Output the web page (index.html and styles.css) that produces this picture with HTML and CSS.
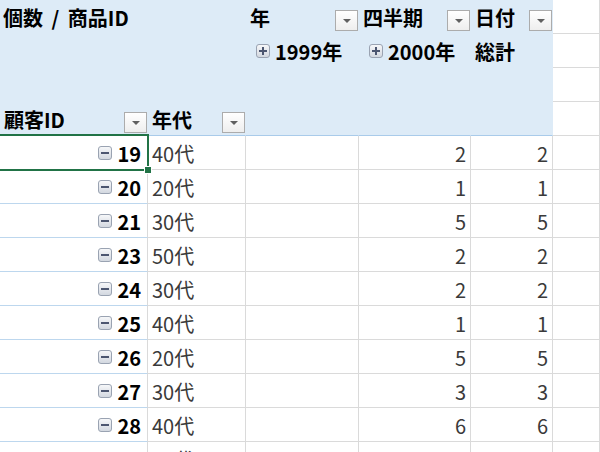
FILE: index.html
```html
<!DOCTYPE html>
<html lang="ja">
<head>
<meta charset="utf-8">
<title>ピボットテーブル</title>
<link rel="stylesheet" href="styles.css">
</head>
<body>
<div class="sheet">
  <!-- header row 1 -->
  <div class="c h"><span class="t b wide">個数 / 商品ID</span></div>
  <div class="c h"></div>
  <div class="c h dd-cell"><span class="t b">年</span><span class="dd"></span></div>
  <div class="c h dd-cell"><span class="t b">四半期</span><span class="dd"></span></div>
  <div class="c h dd-cell"><span class="t b">日付</span><span class="dd"></span></div>
  <div class="c f"></div>
  <!-- header row 2 -->
  <div class="c h"></div>
  <div class="c h"></div>
  <div class="c h"><span class="pm plus"></span><span class="t b">1999年</span></div>
  <div class="c h"><span class="pm plus"></span><span class="t b">2000年</span></div>
  <div class="c h"><span class="t b">総計</span></div>
  <div class="c f"></div>
  <!-- header row 3 -->
  <div class="c h"></div>
  <div class="c h"></div>
  <div class="c h"></div>
  <div class="c h"></div>
  <div class="c h"></div>
  <div class="c f"></div>
  <!-- header row 4 -->
  <div class="c h hl dd-cell"><span class="t b">顧客ID</span><span class="dd"></span></div>
  <div class="c h hl dd-cell"><span class="t b">年代</span><span class="dd"></span></div>
  <div class="c h hl"></div>
  <div class="c h hl"></div>
  <div class="c h hl"></div>
  <div class="c f"></div>

  <!-- data rows -->
  <div class="c id selected"><span class="pm"></span><span class="t b">19</span><span class="sel"></span></div>
  <div class="c"><span class="t">40代</span></div>
  <div class="c n"></div>
  <div class="c n"><span class="t">2</span></div>
  <div class="c n"><span class="t">2</span></div>
  <div class="c f"></div>

  <div class="c id"><span class="pm"></span><span class="t b">20</span></div>
  <div class="c"><span class="t">20代</span></div>
  <div class="c n"></div>
  <div class="c n"><span class="t">1</span></div>
  <div class="c n"><span class="t">1</span></div>
  <div class="c f"></div>

  <div class="c id"><span class="pm"></span><span class="t b">21</span></div>
  <div class="c"><span class="t">30代</span></div>
  <div class="c n"></div>
  <div class="c n"><span class="t">5</span></div>
  <div class="c n"><span class="t">5</span></div>
  <div class="c f"></div>

  <div class="c id"><span class="pm"></span><span class="t b">23</span></div>
  <div class="c"><span class="t">50代</span></div>
  <div class="c n"></div>
  <div class="c n"><span class="t">2</span></div>
  <div class="c n"><span class="t">2</span></div>
  <div class="c f"></div>

  <div class="c id"><span class="pm"></span><span class="t b">24</span></div>
  <div class="c"><span class="t">30代</span></div>
  <div class="c n"></div>
  <div class="c n"><span class="t">2</span></div>
  <div class="c n"><span class="t">2</span></div>
  <div class="c f"></div>

  <div class="c id"><span class="pm"></span><span class="t b">25</span></div>
  <div class="c"><span class="t">40代</span></div>
  <div class="c n"></div>
  <div class="c n"><span class="t">1</span></div>
  <div class="c n"><span class="t">1</span></div>
  <div class="c f"></div>

  <div class="c id"><span class="pm"></span><span class="t b">26</span></div>
  <div class="c"><span class="t">20代</span></div>
  <div class="c n"></div>
  <div class="c n"><span class="t">5</span></div>
  <div class="c n"><span class="t">5</span></div>
  <div class="c f"></div>

  <div class="c id"><span class="pm"></span><span class="t b">27</span></div>
  <div class="c"><span class="t">30代</span></div>
  <div class="c n"></div>
  <div class="c n"><span class="t">3</span></div>
  <div class="c n"><span class="t">3</span></div>
  <div class="c f"></div>

  <div class="c id"><span class="pm"></span><span class="t b">28</span></div>
  <div class="c"><span class="t">40代</span></div>
  <div class="c n"></div>
  <div class="c n"><span class="t">6</span></div>
  <div class="c n"><span class="t">6</span></div>
  <div class="c f"></div>

  <div class="c id"><span class="pm"></span><span class="t b">29</span></div>
  <div class="c"><span class="t">40代</span></div>
  <div class="c n"><span class="t">1</span></div>
  <div class="c n"><span class="t">11</span></div>
  <div class="c n"><span class="t">12</span></div>
  <div class="c f"></div>
</div>
</body>
</html>
```

FILE: styles.css
```css
html, body {
  margin: 0;
  padding: 0;
  background: #ffffff;
  overflow: hidden;
}

body {
  width: 600px;
  height: 452px;
  font-family: "Noto Sans CJK JP", "Noto Sans", sans-serif;
  font-size: 20px;
  color: #3a3a3a;
}

.sheet {
  display: grid;
  grid-template-columns: 148px 98px 113px 112px 82px 47px;
  grid-auto-rows: 34px;
}

.c {
  box-sizing: border-box;
  display: flex;
  align-items: center;
  padding: 0 4px;
  border-right: 1px solid #dadada;
  border-bottom: 1px solid #dadada;
  white-space: nowrap;
  overflow: hidden;
  min-width: 0;
}

.c:first-child,
.c.id {
  padding-left: 3px;
}

.t {
  line-height: 1;
  padding-top: 2px;
}

.b {
  font-weight: 700;
  color: #000000;
}

.wide {
  word-spacing: 4px;
}

/* pivot header area */
.h {
  background: #ddebf7;
  border-right-color: #ddebf7;
  border-bottom-color: #ddebf7;
}

.h.hl {
  border-bottom-color: #a9cbea;
}

.f {
  background: #ffffff;
}

.dd-cell {
  padding-right: 0;
}

.dd {
  box-sizing: border-box;
  margin-left: auto;
  align-self: flex-end;
  margin-bottom: 2px;
  width: 23px;
  height: 21px;
  flex: none;
  border: 1px solid #acacac;
  background: linear-gradient(#ffffff, #eeeeee);
  display: flex;
  align-items: center;
  justify-content: center;
}

.dd::after {
  content: "";
  width: 0;
  height: 0;
  border-left: 4px solid transparent;
  border-right: 4px solid transparent;
  border-top: 4px solid #606060;
  margin-top: 1px;
}

/* expand / collapse buttons */
.pm {
  box-sizing: border-box;
  position: relative;
  flex: none;
  width: 14px;
  height: 14px;
  margin-right: 5px;
  border: 1px solid #9aa3b2;
  border-radius: 3px;
  background: linear-gradient(#f6f7f9, #d3d8e0);
}

.pm::before {
  content: "";
  position: absolute;
  left: 2px;
  right: 2px;
  top: 5px;
  height: 2px;
  background: #4c5670;
}

.pm.plus {
  margin-left: 6px;
}

.pm.plus::after {
  content: "";
  position: absolute;
  top: 2px;
  bottom: 2px;
  left: 5px;
  width: 2px;
  background: #4c5670;
}

/* row labels */
.id {
  justify-content: flex-end;
  padding-right: 6px;
  border-bottom-color: #bdd7ee;
}

.n {
  justify-content: flex-end;
  padding-right: 4px;
}

/* active cell */
.selected {
  position: relative;
  overflow: visible;
  z-index: 2;
}

.sel {
  position: absolute;
  top: -2px;
  left: -3px;
  right: -2px;
  bottom: -2px;
  border: 2px solid #217346;
  pointer-events: none;
}

.sel::after {
  content: "";
  position: absolute;
  right: -5px;
  bottom: -5px;
  width: 6px;
  height: 6px;
  background: #217346;
  border: 1px solid #ffffff;
}
```
